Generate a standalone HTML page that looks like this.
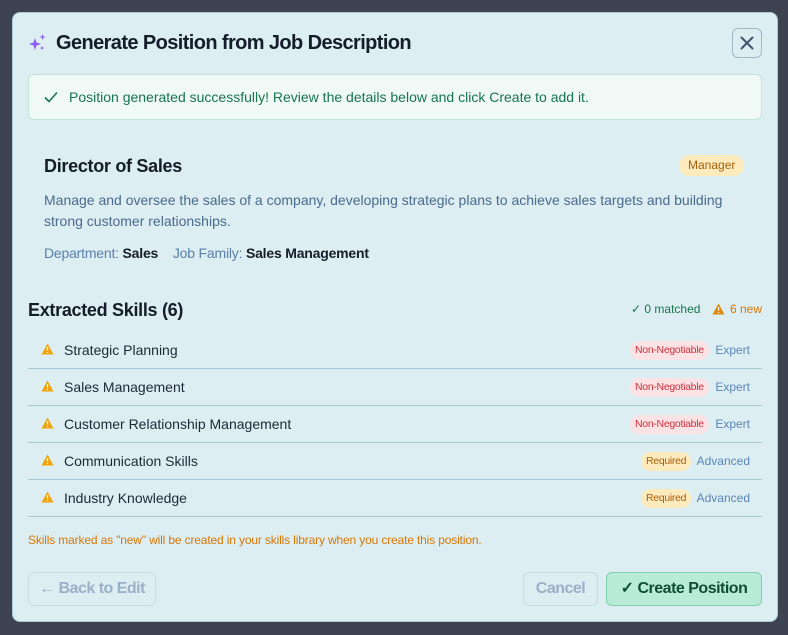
<!DOCTYPE html>
<html><head><style>
*{box-sizing:border-box;margin:0;padding:0}
body{width:788px;height:635px;background:#3d4350;font-family:"Liberation Sans",sans-serif;position:relative;overflow:hidden}
.m{position:absolute;left:12px;top:12px;width:766px;height:610px;background:#dceef2;border-radius:8px;border:1px solid #a9cdd3}
.t{position:absolute;left:56px;top:32px;font-size:20px;font-weight:bold;color:#151c2a;letter-spacing:-0.6px}
.x{position:absolute;left:732px;top:28px;width:30px;height:30px;border:1px solid #9fb8c8;border-radius:6px}
.ok{position:absolute;left:28px;top:74px;width:734px;height:46px;background:#f1f9f7;border:1px solid #bfe6d9;border-radius:6px;color:#17744f;font-size:14px;line-height:44px;padding-left:40px}
.abs{position:absolute}
.row{position:absolute;left:28px;width:734px;height:37px;border-bottom:1px solid #a6cbd2;font-size:14px;color:#1e2838}
.row .n{position:absolute;left:36px;top:10px}
.row svg{position:absolute;left:13px;top:11px}
.tag{position:absolute;top:9px;height:19px;border-radius:10px;font-size:10.5px;line-height:19px;padding:0 5px;letter-spacing:-0.3px}
.neg{background:#fbe3e5;color:#d0303d}
.req{background:#fdebbd;color:#a7600b}
.lv{position:absolute;right:12px;top:11px;font-size:12px;color:#5a86b8}
.btn{position:absolute;top:572px;height:34px;border-radius:6px;font-size:16px;line-height:32px;text-align:center;font-weight:bold;letter-spacing:-0.5px}
</style></head><body>
<div class="m"></div>
<svg class="abs" style="left:28px;top:33px" width="20" height="20" viewBox="0 0 20 20" fill="#8b5cf6"><path d="M7 5 L8.5 9.5 L13 11 L8.5 12.5 L7 17 L5.5 12.5 L1 11 L5.5 9.5Z"/><path d="M14.5 1 L15.3 3.2 L17.5 4 L15.3 4.8 L14.5 7 L13.7 4.8 L11.5 4 L13.7 3.2Z"/><path d="M14 13 L14.6 14.4 L16 15 L14.6 15.6 L14 17 L13.4 15.6 L12 15 L13.4 14.4Z"/></svg>
<div class="t">Generate Position from Job Description</div>
<div class="x"><svg width="28" height="28" viewBox="0 0 28 28"><path d="M8.5 8.5 L19.5 19.5 M19.5 8.5 L8.5 19.5" stroke="#3f5470" stroke-width="2" stroke-linecap="round"/></svg></div>
<div class="ok">Position generated successfully! Review the details below and click Create to add it.</div>
<svg class="abs" style="left:43px;top:89px" width="16" height="16" viewBox="0 0 16 16"><path d="M2 8.5 L6 12.5 L14 3.5" stroke="#17744f" stroke-width="1.6" fill="none"/></svg>
<div class="abs" style="left:44px;top:156px;font-size:18px;font-weight:bold;color:#151c2a;letter-spacing:-0.3px">Director of Sales</div>
<div class="abs" style="left:679px;top:155px;height:21px;padding:0 9px;background:#fdebbd;color:#a7600b;font-size:12px;line-height:21px;border-radius:11px">Manager</div>
<div class="abs" style="left:44px;top:190px;width:700px;font-size:14px;line-height:21px;color:#4a6a8e">Manage and oversee the sales of a company, developing strategic plans to achieve sales targets and building strong customer relationships.</div>
<div class="abs" style="left:44px;top:245px;font-size:14px;color:#5a7fa8;letter-spacing:-0.2px">Department: <b style="color:#151c2a">Sales</b>&nbsp;&nbsp;&nbsp;&nbsp;Job Family: <b style="color:#151c2a">Sales Management</b></div>
<div class="abs" style="left:28px;top:300px;font-size:18px;font-weight:bold;color:#151c2a;letter-spacing:-0.3px">Extracted Skills (6)</div>
<div class="abs" style="left:631px;top:302px;font-size:12px;color:#17744f">✓ 0 matched</div>
<svg class="abs" style="left:712px;top:303px" width="13" height="12" viewBox="0 0 13 12"><path d="M6.5 0.5 L12.5 11.5 L0.5 11.5Z" fill="#e08a0b"/><path d="M6.5 4 V7.5 M6.5 9 V10" stroke="#fff" stroke-width="1.3"/></svg>
<div class="abs" style="left:730px;top:302px;font-size:12px;color:#d97706">6 new</div>
<div class="row" style="top:332px"><svg width="13" height="12" viewBox="0 0 13 12"><path d="M6.5 0.5 L12.5 11.5 L0.5 11.5Z" fill="#f0a30a"/><path d="M6.5 4 V7.5 M6.5 9 V10" stroke="#fff" stroke-width="1.3"/></svg><span class="n">Strategic Planning</span><span class="tag neg" style="left:602px">Non-Negotiable</span><span class="lv">Expert</span></div>
<div class="row" style="top:369px"><svg width="13" height="12" viewBox="0 0 13 12"><path d="M6.5 0.5 L12.5 11.5 L0.5 11.5Z" fill="#f0a30a"/><path d="M6.5 4 V7.5 M6.5 9 V10" stroke="#fff" stroke-width="1.3"/></svg><span class="n">Sales Management</span><span class="tag neg" style="left:602px">Non-Negotiable</span><span class="lv">Expert</span></div>
<div class="row" style="top:406px"><svg width="13" height="12" viewBox="0 0 13 12"><path d="M6.5 0.5 L12.5 11.5 L0.5 11.5Z" fill="#f0a30a"/><path d="M6.5 4 V7.5 M6.5 9 V10" stroke="#fff" stroke-width="1.3"/></svg><span class="n">Customer Relationship Management</span><span class="tag neg" style="left:602px">Non-Negotiable</span><span class="lv">Expert</span></div>
<div class="row" style="top:443px"><svg width="13" height="12" viewBox="0 0 13 12"><path d="M6.5 0.5 L12.5 11.5 L0.5 11.5Z" fill="#f0a30a"/><path d="M6.5 4 V7.5 M6.5 9 V10" stroke="#fff" stroke-width="1.3"/></svg><span class="n">Communication Skills</span><span class="tag req" style="left:613px">Required</span><span class="lv">Advanced</span></div>
<div class="row" style="top:480px"><svg width="13" height="12" viewBox="0 0 13 12"><path d="M6.5 0.5 L12.5 11.5 L0.5 11.5Z" fill="#f0a30a"/><path d="M6.5 4 V7.5 M6.5 9 V10" stroke="#fff" stroke-width="1.3"/></svg><span class="n">Industry Knowledge</span><span class="tag req" style="left:613px">Required</span><span class="lv">Advanced</span></div>
<div class="abs" style="left:28px;top:533px;font-size:12px;color:#d97706;letter-spacing:-0.15px">Skills marked as "new" will be created in your skills library when you create this position.</div>
<div class="btn" style="left:28px;width:128px;border:1px solid #c6dbe3;color:#9ab0c6">← Back to Edit</div>
<div class="btn" style="left:523px;width:75px;border:1px solid #c6dbe3;color:#9ab0c6">Cancel</div>
<div class="btn" style="left:606px;width:156px;border:1px solid #7fcfa8;background:#b9ecd8;color:#0f4e36">✓ Create Position</div>
</body></html>
